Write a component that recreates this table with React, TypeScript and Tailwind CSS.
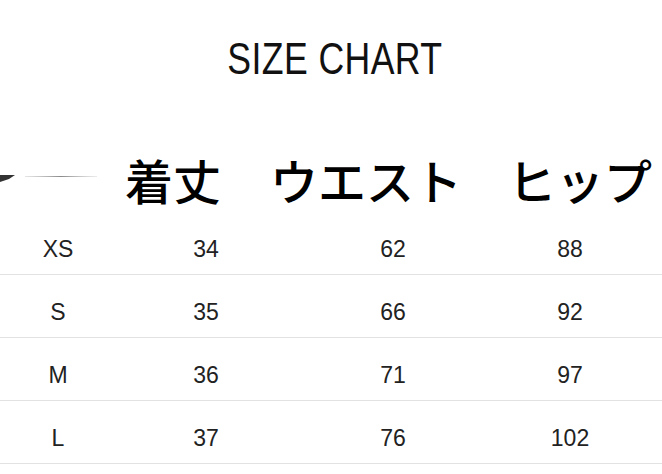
const rows = [
  { size: 'XS', length: 34, waist: 62, hip: 88 },
  { size: 'S', length: 35, waist: 66, hip: 92 },
  { size: 'M', length: 36, waist: 71, hip: 97 },
  { size: 'L', length: 37, waist: 76, hip: 102 },
]

function Decoration() {
  return (
    <svg width="100" height="12" viewBox="0 0 100 12" className="block">
      <defs>
        <linearGradient id="fade" x1="0" x2="1" y1="0" y2="0">
          <stop offset="0" stopColor="#bdbdbd" stopOpacity="0.4" />
          <stop offset="0.5" stopColor="#8a8a8a" />
          <stop offset="1" stopColor="#bdbdbd" stopOpacity="0.3" />
        </linearGradient>
      </defs>
      <path d="M0 2 L15 2 L9 6 L0 9 Z" fill="#333" />
      <rect x="25" y="3" width="72" height="1" fill="url(#fade)" />
    </svg>
  )
}

export default function App() {
  return (
    <div className="w-[662px] h-[474px] bg-white overflow-hidden font-['Liberation_Sans',sans-serif]">
      <div className="pt-[37px] h-[81px] text-center">
        <h1 className="text-[44px] leading-none text-[#111] inline-block scale-x-[0.81] origin-center translate-x-[4px] tracking-[0.5px]">
          SIZE CHART
        </h1>
      </div>

      <div className="h-[131px] grid grid-cols-[125px_145px_238px_1fr] items-start pt-[74px] font-['Noto_Sans_CJK_JP','Liberation_Sans',sans-serif] text-[48px] leading-none font-medium text-black">
        <div className="pt-[18px]">
          <Decoration />
        </div>
        <div>着丈</div>
        <div>ウエスト</div>
        <div>ヒップ</div>
      </div>

      <div>
        {rows.map((r) => (
          <div
            key={r.size}
            className="h-[63px] border-b border-[#e2e2e2] grid grid-cols-[116px_180px_194px_160px] text-center text-[23px] leading-none text-[#222] pt-[26px]"
          >
            <div>{r.size}</div>
            <div>{r.length}</div>
            <div>{r.waist}</div>
            <div>{r.hip}</div>
          </div>
        ))}
      </div>
    </div>
  )
}
